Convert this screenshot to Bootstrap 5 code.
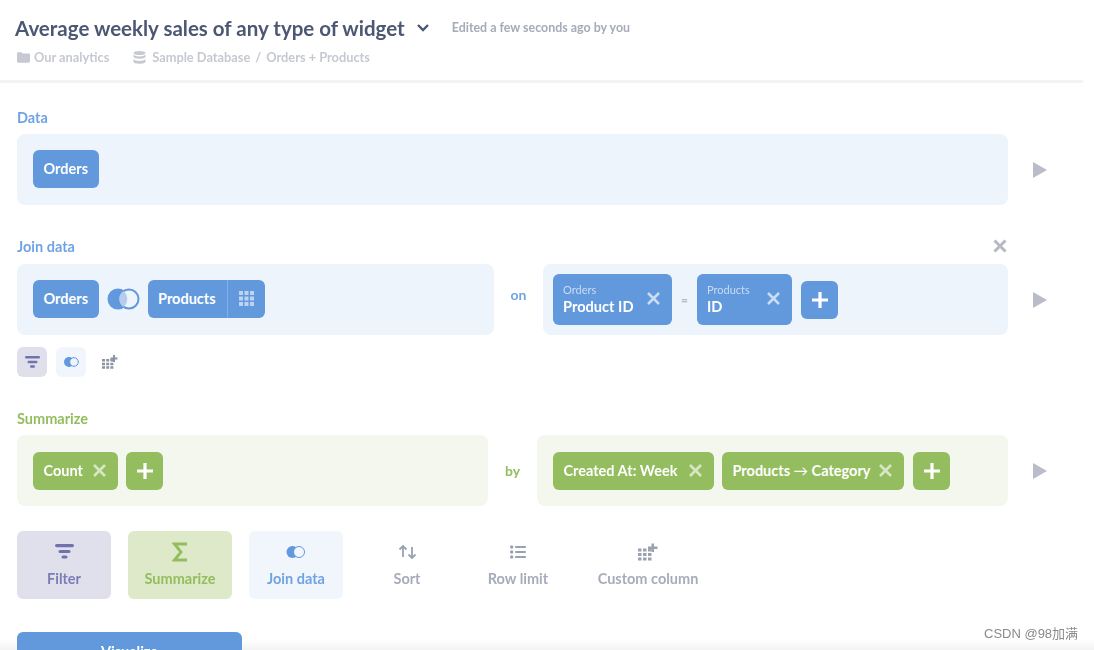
<!DOCTYPE html>
<html lang="en">
<head>
<meta charset="utf-8">
<title>Average weekly sales of any type of widget</title>
<link href="https://cdn.jsdelivr.net/npm/bootstrap@5.3.0/dist/css/bootstrap.min.css" rel="stylesheet">
<style>
html,body{height:650px;overflow:hidden;background:#fff}
body{font-family:Lato,"Liberation Sans",sans-serif;color:#4c5773;position:relative}
.shot{position:relative;width:1083px;height:650px;overflow:hidden;filter:blur(.35px)}
.topbar{height:83px;border-bottom:3px solid #f2f3f4;padding:15px 0 0 15px}
.qtitle{font-size:20.5px;font-weight:700;line-height:26px;margin:0;color:#4c5773}
.edited{font-size:12.45px;font-weight:700;color:#a6abb8;margin-left:22px}
.crumbs{font-size:12.8px;font-weight:700;color:#c6c9d2;margin-top:8px;line-height:16px;padding-left:2px}
.body-wrap{padding:26px 0 0 17px}
.sec-label{font-size:14.5px;font-weight:700;line-height:18px;height:18px}
.c-blue{color:#6fa3e3}.c-green{color:#93bd5e}
.step{height:71px;width:1044px}
.panel{height:71px;border-radius:8px;display:flex;align-items:center;padding-left:16px}
.panel-up{padding-bottom:2px}
.p-blue{background:#edf4fb}.p-green{background:#f3f7ee}
.chip{height:38px;border-radius:6px;color:#fff;font-size:14.5px;font-weight:700;display:inline-flex;align-items:center;padding:0 10.5px;white-space:nowrap}
.bg-b{background:#6298dc}.bg-g{background:#93bd5e}
.xmark{margin-left:12px}
.plus{width:37px;padding:0;justify-content:center}
.pair{height:51px;border-radius:6px;color:#fff;padding:0 11px 0 10px;display:inline-flex;align-items:center;justify-content:space-between;font-weight:700}
.pair small{display:block;font-size:11px;font-weight:400;color:#c9dcf4;line-height:12px}
.pair b{display:block;font-size:14.6px;line-height:18px;font-weight:700;margin-top:2px}
.joiner{font-size:14px;font-weight:700;text-align:center}
.thin-arrow{font-weight:400}
.mini{width:30px;height:30px;border-radius:6px;display:flex;align-items:center;justify-content:center}
.act{height:68px;border-radius:6px;display:flex;flex-direction:column;align-items:center;justify-content:flex-start;padding-top:11px;font-size:14.5px;font-weight:700;color:#a6acb9}
.act svg{display:block;height:20px;margin-bottom:6px}
.viz{width:225px;height:40px;background:#6298dc;border-radius:6px 6px 0 0;color:#fff;font-size:14.5px;font-weight:700;text-align:center;padding-top:9px;margin-top:33px}
.fade-b{position:absolute;left:0;right:0;bottom:0;height:11px;background:linear-gradient(rgba(240,240,240,0),rgba(240,240,240,.75))}
.wm{position:absolute;left:984px;top:626px;font-size:13px;line-height:16px;color:#8a8a8a;font-family:"Liberation Sans","Noto Sans CJK SC",sans-serif}
</style>
</head>
<body>
<div class="fade-b"></div>
<div class="shot">
  <header class="topbar">
    <div class="d-flex align-items-center">
      <h1 class="qtitle">Average weekly sales of any type of widget</h1>
      <svg style="margin-left:11px" width="14" height="10" viewBox="0 0 14 10" fill="none" stroke="#4c5773" stroke-width="2.4"><path d="M2 2l5 5 5-5"/></svg>
      <span class="edited">Edited a few seconds ago by you</span>
    </div>
    <div class="crumbs d-flex align-items-center">
      <svg width="13" height="11" viewBox="0 0 13 11" class="me-1"><path fill="#c6c9d2" d="M0 1.5C0 .7.5.2 1.2.2h3.2l1.3 1.4h6c.7 0 1.3.5 1.3 1.2v6.8c0 .7-.6 1.2-1.3 1.2H1.2C.5 10.800 0 10.300 0 9.600z"/></svg>
      <span>Our analytics</span>
      <svg width="13" height="13" viewBox="0 0 13 13" style="margin-left:24px;margin-right:6px"><g fill="#c6c9d2"><ellipse cx="6.500" cy="2" rx="6" ry="2"/><path d="M.5 3.600c1 1.300 3.300 1.800 6 1.800s5-.5 6-1.800v2.200c0 1.100-2.700 2-6 2s-6-.9-6-2z"/><path d="M.5 8c1 1.300 3.300 1.800 6 1.800s5-.5 6-1.800v2.800c0 1.100-2.700 2-6 2s-6-.9-6-2z"/></g></svg>
      <span>Sample Database</span><span style="margin-left:5px;margin-right:5px">/</span><span>Orders + Products</span>
    </div>
  </header>

  <main class="body-wrap">
    <div class="sec-label c-blue">Data</div>
    <div class="step d-flex align-items-center" style="margin-top:7px">
      <div class="panel panel-up p-blue" style="width:991px"><span class="chip bg-b">Orders</span></div>
      <svg style="margin-left:25px" width="14" height="16" viewBox="0 0 14 16"><path fill="#babdc9" d="M0 0l14 8L0 16z"/></svg>
    </div>

    <div class="d-flex justify-content-between" style="width:991px;margin-top:33px">
      <div class="sec-label c-blue">Join data</div>
      <svg width="14" height="14" viewBox="0 0 14 14" style="margin:1px 1px 0 0" stroke="#b6b9c2" stroke-width="3"><path d="M1.500 1.500l11 11M12.500 1.500l-11 11"/></svg>
    </div>
    <div class="step d-flex align-items-center" style="margin-top:8px">
      <div class="panel panel-up p-blue" style="width:477px">
        <span class="chip bg-b">Orders</span>
        <svg width="33" height="22" viewBox="0 0 33 22" class="mx-2"><circle cx="11" cy="11" r="10.500" fill="#6298dc"/><circle cx="22" cy="11" r="9.500" fill="#edf4fb" stroke="#6298dc" stroke-width="2"/><path d="M16.500 3a10.500 10.500 0 0 1 0 16a9.500 9.500 0 0 1 0-16z" fill="#b4cdee"/></svg>
        <span class="chip bg-b p-0"><span style="padding:0 10.5px;width:79px">Products</span><span class="d-flex align-items-center justify-content-center h-100" style="width:38px;border-left:1px solid #85b0e5">
          <svg width="15" height="15" viewBox="0 0 15 15"><g fill="#bcd3f1"><path d="M0 0h4v4H0zM5.500 0h4v4h-4zM11 0h4v4h-4zM0 5.500h4v4H0zM5.500 5.500h4v4h-4zM11 5.500h4v4h-4zM0 11h4v4H0zM5.500 11h4v4h-4zM11 11h4v4h-4z"/></g></svg></span></span>
      </div>
      <div class="joiner c-blue" style="width:49px;margin-top:-10px">on</div>
      <div class="panel p-blue" style="width:465px;padding-left:10px">
        <span class="pair bg-b" style="width:119px;padding-right:12px"><span><small>Orders</small><b>Product ID</b></span><svg width="13" height="13" viewBox="0 0 13 13" stroke="#c9dcf4" stroke-width="2.600" style="margin-top:-2px"><path d="M1 1l11 11M12 1L1 12"/></svg></span>
        <span class="text-center" style="width:25px;color:#b5bac4;font-size:12px;font-weight:700">=</span>
        <span class="pair bg-b" style="width:95px;padding-right:12px"><span><small>Products</small><b>ID</b></span><svg width="13" height="13" viewBox="0 0 13 13" stroke="#c9dcf4" stroke-width="2.600" style="margin-top:-2px"><path d="M1 1l11 11M12 1L1 12"/></svg></span>
        <span class="chip bg-b plus" style="margin-left:9px"><svg width="16" height="16" viewBox="0 0 16 16" stroke="#fff" stroke-width="3.200"><path d="M8 0v16M0 8h16"/></svg></span>
      </div>
      <svg style="margin-left:25px" width="14" height="16" viewBox="0 0 14 16"><path fill="#babdc9" d="M0 0l14 8L0 16z"/></svg>
    </div>

    <div class="d-flex align-items-center" style="gap:9px;margin-top:12px">
      <div class="mini" style="background:#e0e0ed"><svg width="15" height="12" viewBox="0 0 15 12"><g fill="#7172ad"><rect width="15" height="2.600" rx="1.300"/><rect x="2.500" y="4.700" width="10" height="2.500" rx="1.200"/><rect x="5" y="9.200" width="5" height="2.500" rx="1.200"/></g></svg></div>
      <div class="mini" style="background:#f1f6fc"><svg width="15" height="10" viewBox="0 0 15 10"><circle cx="5" cy="5" r="5" fill="#6298dc"/><circle cx="10" cy="5" r="4.300" fill="#edf4fb" stroke="#6298dc"/></svg></div>
      <div class="mini"><svg width="16" height="14" viewBox="0 0 16 14"><g fill="#8d93a5"><path d="M0 4h3v2.500H0zM4.200 4h3v2.500h-3zM8.400 4h3v2.500h-3zM0 7.700h3v2.500H0zM4.200 7.700h3v2.500h-3zM8.400 7.700h3v2.500h-3zM0 11.300h3v2.500H0zM4.200 11.300h3v2.500h-3zM8.400 11.300h3v2.500h-3z"/><path d="M11 0h2v2.500h2.500v2H13V7h-2V4.500H8.500v-2H11z"/></g></svg></div>
    </div>

    <div class="sec-label c-green" style="margin-top:33px">Summarize</div>
    <div class="step d-flex align-items-center" style="margin-top:7px">
      <div class="panel p-green" style="width:471px">
        <span class="chip bg-g" style="width:85px;justify-content:space-between;padding-right:12px">Count<svg width="13" height="13" viewBox="0 0 13 13" stroke="#d7e6c5" stroke-width="2.600"><path d="M1 1l11 11M12 1L1 12"/></svg></span>
        <span class="chip bg-g plus" style="margin-left:8px"><svg width="16" height="16" viewBox="0 0 16 16" stroke="#fff" stroke-width="3.200"><path d="M8 0v16M0 8h16"/></svg></span>
      </div>
      <div class="joiner c-green" style="width:49px">by</div>
      <div class="panel p-green" style="width:471px">
        <span class="chip bg-g" style="width:161px;justify-content:space-between;padding-right:12px">Created At: Week<svg width="13" height="13" viewBox="0 0 13 13" stroke="#d7e6c5" stroke-width="2.600"><path d="M1 1l11 11M12 1L1 12"/></svg></span>
        <span class="chip bg-g" style="margin-left:8px;width:182px;justify-content:space-between;padding-right:12px"><span>Products <span class="thin-arrow">→</span> Category</span><svg width="13" height="13" viewBox="0 0 13 13" stroke="#d7e6c5" stroke-width="2.600"><path d="M1 1l11 11M12 1L1 12"/></svg></span>
        <span class="chip bg-g plus" style="margin-left:9px"><svg width="16" height="16" viewBox="0 0 16 16" stroke="#fff" stroke-width="3.200"><path d="M8 0v16M0 8h16"/></svg></span>
      </div>
      <svg style="margin-left:25px" width="14" height="16" viewBox="0 0 14 16"><path fill="#babdc9" d="M0 0l14 8L0 16z"/></svg>
    </div>

    <div class="d-flex" style="margin-top:25px">
      <div class="act" style="width:94px;background:#e0e0ed;color:#7c7db5"><svg width="19" height="20" viewBox="0 0 19 16"><g fill="#7172ad"><rect width="19" height="3.200" rx="1.600"/><rect x="3.500" y="6" width="12" height="3" rx="1.500"/><rect x="6.500" y="11.500" width="6" height="3" rx="1.500"/></g></svg>Filter</div>
      <div class="act" style="width:104px;margin-left:17px;background:#dde9c9;color:#93bd5e"><svg width="16" height="20" viewBox="0 0 16 20" fill="none" stroke="#93bd5e" stroke-width="2.800"><path d="M15 2H2.500l6.500 8-6.500 8H15"/></svg>Summarize</div>
      <div class="act" style="width:94px;margin-left:17px;background:#f1f6fc;color:#6fa3e3"><svg width="20" height="20" viewBox="0 0 20 14"><circle cx="6.500" cy="7" r="6" fill="#6298dc"/><circle cx="13" cy="7" r="5.500" fill="#f1f6fc" stroke="#6298dc"/></svg>Join data</div>
      <div class="act" style="width:94px;margin-left:17px"><svg width="19" height="20" viewBox="0 0 19 16" fill="none" stroke="#9aa1b1" stroke-width="1.800"><path d="M5 13V2M1.500 5.500L5 2l3.500 3.500M14 3v11M10.500 10.500L14 14l3.500-3.500"/></svg>Sort</div>
      <div class="act" style="width:94px;margin-left:17px"><svg width="16" height="20" viewBox="0 0 16 14"><g fill="#9aa1b1"><circle cx="1.700" cy="2" r="1.700"/><circle cx="1.700" cy="7" r="1.700"/><circle cx="1.700" cy="12" r="1.700"/><rect x="5" y="1" width="11" height="2" rx=".8"/><rect x="5" y="6" width="11" height="2" rx=".8"/><rect x="5" y="11" width="11" height="2" rx=".8"/></g></svg>Row limit</div>
      <div class="act" style="width:130px;margin-left:18px"><svg width="20" height="20" viewBox="0 0 20 17"><g fill="#9aa1b1"><path d="M0 5h3.500v3H0zM5 5h3.500v3H5zM10 5h3.500v3H10zM0 9.500h3.500v3H0zM5 9.500h3.500v3H5zM10 9.500h3.500v3H10zM0 14h3.500v3H0zM5 14h3.500v3H5zM10 14h3.500v3H10z"/><path d="M13.500 0H16v3h3.500v2.500H16v3h-2.500v-3H10V3h3.500z"/></g></svg>Custom column</div>
    </div>

    <div class="viz">Visualize</div>
  </main>
</div>
<div class="wm">CSDN @98加满</div>
<script src="https://cdn.jsdelivr.net/npm/bootstrap@5.3.0/dist/js/bootstrap.bundle.min.js"></script>
</body>
</html>
